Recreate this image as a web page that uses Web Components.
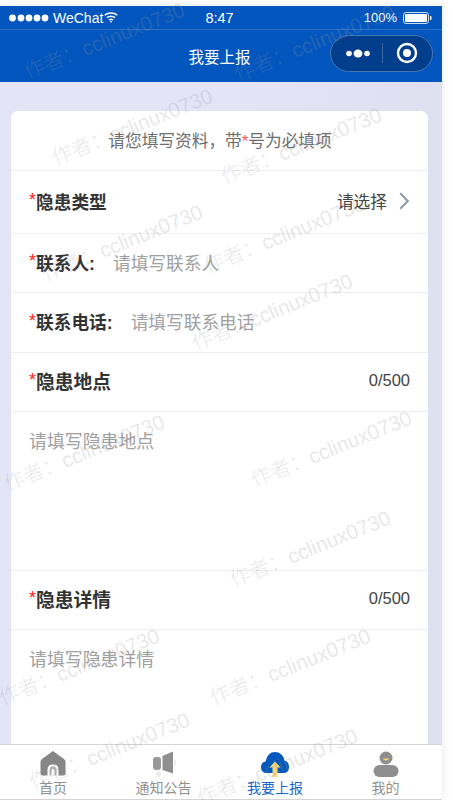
<!DOCTYPE html>
<html lang="zh">
<head>
<meta charset="utf-8">
<title>我要上报</title>
<style>
  html, body { margin: 0; padding: 0; background: #fff; }
  body { font-family: "Liberation Sans", "Noto Sans CJK SC", sans-serif; overflow: hidden; }
</style>
</head>
<body>
<app-shell>
  <status-bar slot="top"></status-bar>
  <nav-bar slot="top" title="我要上报"></nav-bar>
  <form-card>
    <form-hint></form-hint>
    <form-row h="62" label="隐患类型"><select-value></select-value></form-row>
    <form-row h="58" label="联系人:" inline placeholder="请填写联系人"></form-row>
    <form-row h="59" label="联系电话:" inline placeholder="请填写联系电话"></form-row>
    <form-row h="58" label="隐患地点" large><span style="font-size:16.5px;color:#444">0/500</span></form-row>
    <text-area-box h="158" placeholder="请填写隐患地点"></text-area-box>
    <form-row h="58" label="隐患详情" large><span style="font-size:16.5px;color:#444">0/500</span></form-row>
    <text-area-box h="158" placeholder="请填写隐患详情"></text-area-box>
  </form-card>
  <tab-bar slot="bottom">
    <tab-item label="首页" icon="home"></tab-item>
    <tab-item label="通知公告" icon="notice"></tab-item>
    <tab-item label="我要上报" icon="report" active></tab-item>
    <tab-item label="我的" icon="me"></tab-item>
  </tab-bar>
</app-shell>
<water-marks></water-marks>

<script>
class AppShell extends HTMLElement {
  constructor() {
    super();
    this.attachShadow({ mode: "open" }).innerHTML = `
      <style>
        :host { display: flex; flex-direction: column; width: 442px; height: 793px; margin-top: 6px;
          box-shadow: 0 0 11px rgba(0,0,0,.09); background: linear-gradient(90deg, #e3e4f6 0, #e3e4f6 50%, #dedfef 100%); border-bottom: 1px solid #d4d4d4; }
        .content { flex: 1; min-height: 0; overflow: hidden; padding: 29px 14px 0 11px; }
      </style>
      <slot name="top"></slot>
      <div class="content"><slot></slot></div>
      <slot name="bottom"></slot>`;
  }
}

class StatusBar extends HTMLElement {
  constructor() {
    super();
    this.attachShadow({ mode: "open" }).innerHTML = `
      <style>
        :host { display: grid; grid-template-columns: 1fr auto 1fr; align-items: center; height: 23px;
          background: #0256bd; color: #fff; font-size: 14px; border-bottom: 1px solid #2f72c9; padding: 0 10px 0 9px; }
        .left { display: flex; align-items: center; gap: 4px; }
        .right { display: flex; align-items: center; justify-content: flex-end; gap: 6px; font-size: 13px; }
        .time { margin-left: -2px; font-size: 14.5px; }
      </style>
      <div class="left">
        <svg width="40" height="8" viewBox="0 0 40 8" fill="#fff">
          <circle cx="3.5" cy="4" r="3.4"/><circle cx="12" cy="4" r="3.4"/><circle cx="20" cy="4" r="3.4"/><circle cx="28" cy="4" r="3.4"/><circle cx="36" cy="4" r="3.4"/>
        </svg>
        <span>WeChat</span>
        <svg width="14" height="11" viewBox="0 0 14 11" fill="none" stroke="#fff" stroke-width="1.5" style="margin-left:-3px">
          <path d="M.7 3.2C4.400.4 9.600.4 13.300 3.200M2.900 5.600C5.300 3.900 8.700 3.900 11.100 5.600M5 8C6.200 7.200 7.800 7.200 9 8"/><circle cx="7" cy="9.600" r=".9" fill="#fff" stroke="none"/>
        </svg>
      </div>
      <div class="time">8:47</div>
      <div class="right">
        <span>100%</span>
        <svg width="29" height="12" viewBox="0 0 29 12">
          <rect x=".5" y=".5" width="25" height="11" rx="2.5" fill="none" stroke="#fff" opacity=".8"/>
          <rect x="2" y="2" width="22" height="8" rx="1" fill="#fff"/>
          <rect x="27" y="4" width="1.500" height="4" rx=".7" fill="#fff"/>
        </svg>
      </div>`;
  }
}

class NavBar extends HTMLElement {
  constructor() {
    super();
    this.attachShadow({ mode: "open" }).innerHTML = `
      <style>
        :host { display: flex; align-items: center; justify-content: flex-end; height: 52px; position: relative;
          background: #0256bd; color: #fff; padding: 0 9px 6px 0; box-sizing: border-box; }
        .title { position: absolute; left: 0; right: 3px; text-align: center; top: 16px; font-size: 15.5px; line-height: 24px; }
        .capsule { display: flex; align-items: center; width: 103px; height: 37px; box-sizing: border-box; border-radius: 19px;
          background: #033e8d; border: 1px solid #4876b4; }
        .dots { width: 51px; display: flex; justify-content: center; padding-left: 2px; box-sizing: border-box; }
        .sep { width: 1px; height: 20px; background: #3c659f; }
        .rec { flex: 1; display: flex; justify-content: center; padding-right: 2px; }
      </style>
      <div class="title"></div>
      <div class="capsule">
        <div class="dots"><svg width="24" height="9" viewBox="0 0 24 9" fill="#fff"><circle cx="3" cy="4.500" r="2.800"/><ellipse cx="12" cy="4.500" rx="4.400" ry="4"/><circle cx="21" cy="4.500" r="2.800"/></svg></div>
        <div class="sep"></div>
        <div class="rec"><svg width="22" height="22" viewBox="0 0 22 22"><circle cx="11" cy="11" r="9" fill="none" stroke="#fff" stroke-width="2.400"/><circle cx="11" cy="11" r="4" fill="#fff"/></svg></div>
      </div>`;
    this.shadowRoot.querySelector(".title").textContent = this.getAttribute("title");
  }
}

class FormCard extends HTMLElement {
  constructor() {
    super();
    this.attachShadow({ mode: "open" }).innerHTML = `
      <style>
        :host { display: block; background: #fff; border-radius: 7px 7px 0 0; }
      </style>
      <slot></slot>`;
  }
}

class FormHint extends HTMLElement {
  constructor() {
    super();
    this.attachShadow({ mode: "open" }).innerHTML = `
      <style>
        :host { display: block; height: 59px; line-height: 62px; text-align: center; font-size: 16.700px; color: #6e6e6e;
          border-bottom: 1px solid #eeeef2; padding-left: 1px; }
        b { color: #f55; font-weight: normal; }
      </style>
      请您填写资料，带<b>*</b>号为必填项`;
  }
}

class FormRow extends HTMLElement {
  constructor() {
    super();
    const root = this.attachShadow({ mode: "open" });
    root.innerHTML = `
      <style>
        :host { display: flex; align-items: center; box-sizing: border-box; padding: 0 18px 3px; border-bottom: 1px solid #eeeef2; }
        .star { color: #f22; font-size: 18px; width: 7.500px; line-height: 18px; margin-top: -1px; font-family: "Liberation Sans", sans-serif; }
        .label { font-size: 17.700px; font-weight: 700; color: #333; white-space: nowrap; margin-left: -.5px; }
        :host([large]) .label { font-size: 18.800px; }
        .ph { font-size: 17.700px; color: #a0a0a0; margin-left: 18px; white-space: nowrap; }
        .end { margin-left: auto; display: flex; align-items: center; }
      </style>
      <span class="star">*</span><span class="label"></span><span class="ph"></span><span class="end"><slot></slot></span>`;
    this.style.height = (+this.getAttribute("h") + 1) + "px";
    root.querySelector(".label").textContent = this.getAttribute("label");
    root.querySelector(".ph").textContent = this.getAttribute("placeholder") || "";
  }
}

class SelectValue extends HTMLElement {
  constructor() {
    super();
    this.attachShadow({ mode: "open" }).innerHTML = `
      <style>
        :host { display: flex; align-items: center; gap: 12px; font-size: 16.700px; color: #444; margin-right: 1px; }
      </style>
      <span>请选择</span>
      <svg width="10" height="18" viewBox="0 0 10 18" fill="none" stroke="#8a9aa8" stroke-width="2"><path d="M1.200 1.200L8.800 9 1.200 16.800"/></svg>`;
  }
}

class TextAreaBox extends HTMLElement {
  constructor() {
    super();
    const root = this.attachShadow({ mode: "open" });
    root.innerHTML = `
      <style>
        :host { display: block; padding: 16px 18px 0; box-sizing: border-box; border-bottom: 1px solid #eeeef2; }
        div { font-size: 17.900px; line-height: 28px; color: #a0a0a0; }
      </style>
      <div></div>`;
    this.style.height = (+this.getAttribute("h") + 1) + "px";
    root.querySelector("div").textContent = this.getAttribute("placeholder");
  }
}

class TabBar extends HTMLElement {
  constructor() {
    super();
    this.attachShadow({ mode: "open" }).innerHTML = `
      <style>
        :host { display: grid; grid-template-columns: 106px 115px 108px 113px; height: 54px; background: #fff; border-top: 1px solid #d4d4d4; position: relative; }
      </style>
      <slot></slot>`;
  }
}

const TAB_ICONS = {
  home: `<path d="M14 1L3 9Q1.500 10.200 1.500 12V23Q1.500 25.500 4 25.500H8.500V19.500Q8.500 14.500 14 14.500T19.500 19.500V25.500H24Q26.500 25.500 26.500 23V12Q26.500 10.200 25 9Z" fill="#868686"/><path d="M10.500 25.500V20Q10.500 16.500 14 16.500T17.500 20V25.500H15.500V20.500Q15.500 18.800 14 18.800T12.500 20.500V25.500Z" fill="#b0b0b0"/>`,
  notice: `<rect x="3" y="7" width="8" height="13" rx="3" fill="#999"/><path d="M12.500 6L23 1.500V23.500L12.500 20Z" fill="#8f8f8f"/><path d="M24.500 9Q28 12.500 24.500 16.500Z" fill="#e8e8e8"/><rect x="6" y="21" width="5" height="6" rx="2.500" fill="#ececec"/>`,
  report: `<path d="M6 23Q0 23 0 17Q0 12.500 4.500 11.500Q6.500 2 14 2T23.500 10.500Q28 12 28 17Q28 23 22 23Z" fill="#0358bc"/><path d="M14 11.500L19.500 17.500H16.500V27H11.500V17.500H8.500Z" fill="#f6d77a"/>`,
  me: `<circle cx="14" cy="8" r="6.500" fill="#8f8f8f"/><path d="M10.500 8.500H17.500Q14 12.500 10.500 8.500Z" fill="#f5d468"/><rect x="1.500" y="15" width="25" height="12" rx="6" fill="#8f8f8f"/>`
};

class TabItem extends HTMLElement {
  constructor() {
    super();
    const root = this.attachShadow({ mode: "open" });
    root.innerHTML = `
      <style>
        :host { display: flex; flex-direction: column; align-items: center; padding-top: 5px; box-sizing: border-box; font-size: 14px; color: #8f8f8f; }
        :host([active]) { color: #1a66c9; }
        svg { display: block; filter: blur(.5px); }
        span { line-height: 18px; margin-top: 2px; white-space: nowrap; }
      </style>
      <svg width="28" height="27" viewBox="0 0 28 27"></svg><span></span>`;
    root.querySelector("svg").innerHTML = TAB_ICONS[this.getAttribute("icon")];
    root.querySelector("span").textContent = this.getAttribute("label");
  }
}

// start point of each watermark: lower left end of the rotated text
const MARKS = [
  [30, 86], [240, 88], [58, 172], [227, 191], [48, 288], [210, 280], [198, 357],
  [10, 498], [257, 494], [236, 594], [5, 712], [216, 712], [35, 796], [203, 812]
];

class WaterMarks extends HTMLElement {
  constructor() {
    super();
    const root = this.attachShadow({ mode: "open" });
    root.innerHTML = `
      <style>
        :host { position: absolute; left: 0; top: 0; width: 453px; height: 800px; overflow: hidden; pointer-events: none; }
        span { position: absolute; font-size: 20.700px; line-height: 28px; height: 28px; white-space: nowrap; color: rgba(150,150,150,.24);
          font-weight: 300; font-family: "Liberation Sans", "Noto Sans CJK SC", sans-serif;
          transform-origin: 0 100%; transform: rotate(-22deg); }
      </style>`;
    MARKS.forEach(([x, y]) => {
      const s = document.createElement("span");
      s.textContent = "作者：cclinux0730";
      s.style.left = x + "px";
      s.style.top = (y - 28) + "px";
      root.appendChild(s);
    });
  }
}

customElements.define("app-shell", AppShell);
customElements.define("status-bar", StatusBar);
customElements.define("nav-bar", NavBar);
customElements.define("form-card", FormCard);
customElements.define("form-hint", FormHint);
customElements.define("form-row", FormRow);
customElements.define("select-value", SelectValue);
customElements.define("text-area-box", TextAreaBox);
customElements.define("tab-bar", TabBar);
customElements.define("tab-item", TabItem);
customElements.define("water-marks", WaterMarks);
</script>
</body>
</html>
